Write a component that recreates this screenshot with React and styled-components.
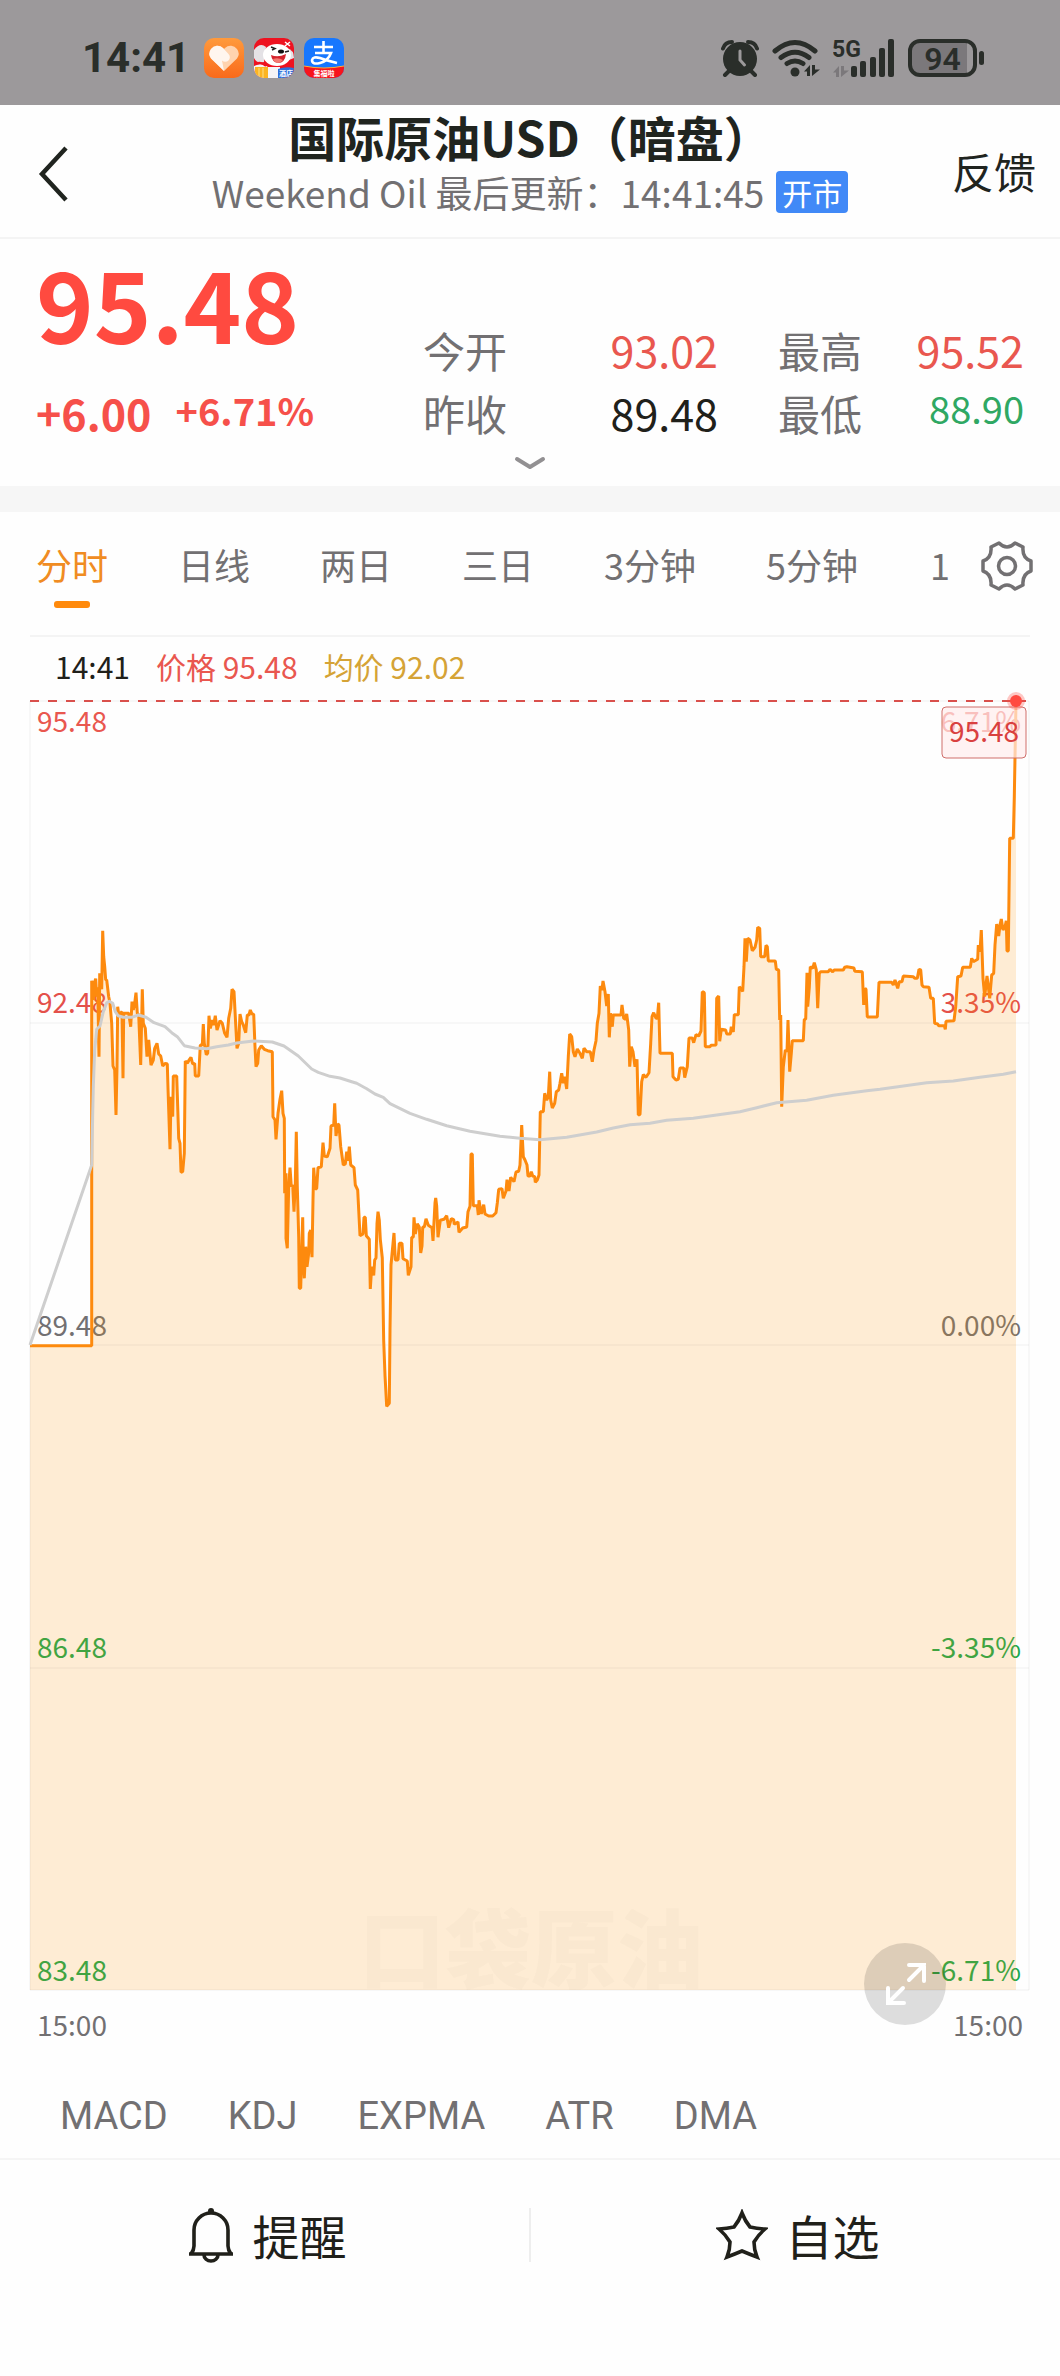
import React, { useState } from "react";
import styled, { createGlobalStyle } from "styled-components";

const GlobalStyle = createGlobalStyle`
  *, *::before, *::after {
    box-sizing: border-box;
  }

  body {
    margin: 0;
    background: #fefefe;
    color: #20241f;
    font-family: "Noto Sans CJK SC", "Noto Sans", sans-serif;
  }

  button {
    margin: 0;
    padding: 0;
    border: none;
    background: none;
    color: inherit;
    font: inherit;
    cursor: pointer;
  }

  svg {
    display: block;
    flex: none;
  }

  h1, p, dl, dt, dd {
    margin: 0;
    font-weight: 400;
  }
`;

const colors = {
  red: "#e9574f",
  green: "#2fa863",
  dark: "#20201a",
  gray: "#727072",
};

/* status bar */

const StatusBar = styled.div`
  display: flex;
  align-items: center;
  justify-content: space-between;
  height: 105px;
  padding: 10px 76px 0 82px;
  background: #9c999b;
  color: #2a2e2a;
`;

const StatusGroup = styled.div`
  display: flex;
  align-items: center;
  gap: ${(props) => props.gap}px;
`;

const Clock = styled.span`
  margin-right: 4px;
  font-family: Roboto, sans-serif;
  font-size: 42px;
  font-weight: 700;
  line-height: 42px;
`;

const Battery = styled.span`
  display: flex;
  align-items: center;
  gap: 2px;

  &::after {
    content: "";
    width: 5px;
    height: 14px;
    border-radius: 3px;
    background: #2a2e2a;
  }
`;

const BatteryCell = styled.span`
  width: 69px;
  height: 38px;
  border: 4px solid #2a2e2a;
  border-radius: 12px;
  background: linear-gradient(90deg, #7b787b 90%, #9c999b 90%);
  font-family: Roboto, sans-serif;
  font-size: 32px;
  font-weight: 600;
  line-height: 32px;
  text-align: center;
`;

/* header */

const Header = styled.header`
  display: grid;
  grid-template-columns: 130px 1fr 130px;
  align-items: center;
  height: 134px;
  border-bottom: 2px solid #f4f4f4;
`;

const BackButton = styled.button`
  justify-self: start;
  padding: 4px 0 0 36px;
`;

const FeedbackButton = styled.button`
  justify-self: end;
  padding-right: 24px;
  font-size: 42px;
  line-height: 48px;
`;

const Heading = styled.div`
  padding-bottom: 20px;
  text-align: center;
  white-space: nowrap;
`;

const Title = styled.h1`
  font-size: 48px;
  font-weight: 700;
  line-height: 56px;
`;

const Subtitle = styled.p`
  display: flex;
  align-items: center;
  justify-content: center;
  gap: 12px;
  margin-top: 5px;
  color: ${colors.gray};
  font-size: 37px;
  line-height: 46px;
`;

const MarketBadge = styled.span`
  padding: 0 6px;
  border-radius: 4px;
  background: #4189f7;
  color: #fff;
  font-size: 30px;
  line-height: 42px;
`;

/* quote */

const Quote = styled.section`
  border-bottom: 26px solid #f6f6f6;
`;

const QuoteBody = styled.div`
  display: grid;
  grid-template-columns: 387fr 601fr;
  height: 206px;
  padding: 0 36px;
`;

const Price = styled.p`
  padding-top: 12px;
  color: #ff4a40;
  font-size: 98px;
  font-weight: 700;
  line-height: 100px;
`;

const Changes = styled.div`
  display: flex;
  align-items: flex-start;
  gap: 24px;
  padding-top: 39px;
  color: #f6504a;
  font-weight: 700;
`;

const Change = styled.span`
  font-size: ${(props) => (props.$small ? 38 : 43)}px;
  line-height: ${(props) => (props.$small ? 40 : 44)}px;
`;

const Stats = styled.dl`
  display: grid;
  grid-template-columns: max-content 211fr max-content 162fr;
  grid-auto-rows: 63px;
  padding-top: 79px;
`;

const StatLabel = styled.dt`
  color: ${colors.gray};
  font-size: 42px;
  line-height: 63px;

  &:nth-of-type(even) {
    padding-left: 60px;
  }
`;

const StatValue = styled.dd`
  color: ${(props) => props.color};
  font-size: ${(props) => (props.$small ? 38 : 43)}px;
  line-height: ${(props) => (props.$small ? 54 : 63)}px;
  text-align: right;
`;

const ExpandQuote = styled.button`
  display: flex;
  justify-content: center;
  width: 100%;
  height: 41px;
  padding-top: 10px;
`;

/* tabs */

const TabBar = styled.div`
  display: flex;
  height: 123px;
`;

const Tabs = styled.nav`
  display: flex;
  flex: 1;
  gap: 70px;
  min-width: 0;
  padding: 26px 0 0 36px;
  overflow: hidden;
`;

const Tab = styled.button`
  display: flex;
  flex: none;
  flex-direction: column;
  align-items: center;
  color: ${(props) => (props.$active ? "#f08c22" : colors.gray)};
  font-size: 36px;
  line-height: 52px;

  &::after {
    content: "";
    width: 36px;
    height: 7px;
    margin-top: 11px;
    border-radius: 3px;
    background: ${(props) => (props.$active ? "#ff8a0c" : "none")};
  }
`;

const NarrowTab = styled(Tab)`
  &::after {
    width: 24px;
  }
`;

const SettingsButton = styled.button`
  height: 108px;
  padding: 0 25px 0 28px;
`;

/* chart */

const ChartSection = styled.section`
  margin: 0 30px;
  border-top: 2px solid #f4f4f4;
`;

const Legend = styled.div`
  display: flex;
  gap: 26px;
  padding-left: 25px;
  font-size: 30px;
  line-height: 58px;
  height: 63px;
`;

const LegendItem = styled.span`
  color: ${(props) => props.color};
`;

const Plot = styled.div`
  position: relative;
`;

const PlotSvg = styled.svg`
  width: 100%;
  height: auto;
  overflow: visible;
  font-size: 28px;
`;

const FullscreenButton = styled.button`
  position: absolute;
  right: 84px;
  bottom: -33px;
  width: 82px;
  height: 82px;
  border-radius: 50%;
  background: rgba(0, 0, 0, 0.13);
`;

const TimeAxis = styled.div`
  display: flex;
  justify-content: space-between;
  height: 68px;
  padding: 0 7px;
  color: ${colors.gray};
  font-size: 28px;
  line-height: 64px;
`;

/* indicators and footer */

const Indicators = styled.nav`
  display: flex;
  gap: 60px;
  height: 100px;
  padding: 14px 0 0 60px;
  border-bottom: 2px solid #f5f5f5;
`;

const Indicator = styled.button`
  color: ${colors.gray};
  font-family: Roboto, sans-serif;
  font-size: 38px;
`;

const Footer = styled.footer`
  display: grid;
  grid-template-columns: 1fr 2px 1fr;
  align-items: center;
  height: 150px;
`;

const FooterButton = styled.button`
  display: flex;
  align-items: center;
  justify-content: center;
  gap: 18px;
  padding-left: 4px;
  color: ${colors.dark};
  font-size: 47px;
  line-height: 54px;
`;

const Divider = styled.span`
  height: 54px;
  background: #eeeeee;
`;

/* data */

const stats = [
  { label: "今开", value: "93.02", color: colors.red },
  { label: "最高", value: "95.52", color: colors.red },
  { label: "昨收", value: "89.48", color: colors.dark },
  { label: "最低", value: "88.90", color: colors.green, small: true },
];

const tabs = ["分时", "日线", "两日", "三日", "3分钟", "5分钟"];

const indicators = ["MACD", "KDJ", "EXPMA", "ATR", "DMA"];

const levels = [
  { y: 1, text: 32, price: "95.48", percent: "6.71%", color: "#e9574f" },
  { y: 323, text: 313, price: "92.48", percent: "3.35%", color: "#e4504a" },
  { y: 645, text: 636, price: "89.48", percent: "0.00%", color: "#727072" },
  { y: 968, text: 958, price: "86.48", percent: "-3.35%", color: "#1aa84f" },
  { y: 1290, text: 1281, price: "83.48", percent: "-6.71%", color: "#1aa84f" },
];

// Each run is measured from its own origin, three units to one chart unit.
const priceRuns = [
  {
    origin: [0, 0],
    points: "0,1937 184,1937",
  },
  {
    origin: [150, 600],
    points: `35,1337 35,242 38,270 41,300 43,250 47,236 50,290 53,262 57,470 59,220 62,240 65,268 68,92 71,170
      74,200 77,240 80,240 86,290 90,310 95,370 99,498 104,510 108,645 111,500 113,320 117,350 121,340 126,335
      129,535 131,340 138,340 146,340 152,380 156,305 160,330 164,310 168,278 172,340 176,345 182,495 187,268
      190,370 196,385 201,470 206,420 213,495 220,480 224,445 231,430 236,462 242,468 248,498 256,490 262,492
      264,565 270,748 273,590 278,650 280,528 290,528 293,620 296,715 300,730 303,817 308,815 313,760 316,483
      322,490 326,482 333,472 338,492 344,490 346,528 356,528 361,435 367,435 370,372 373,430 379,464 383,460
      387,347 391,385 397,360 401,375 406,347 411,390 420,362 427,370 434,400 441,412 446,355 452,325 456,268
      462,275 466,350 471,445 476,430 480,342 485,365 490,375 497,398 502,345 507,345 511,330 516,342 521,343
      525,440 528,500 533,490 536,450 544,437 553,448 563,452 577,455 578,560 579,650 585,660 588,718 594,640
      600,598 605,572 609,640 613,655 614,880 618,820 618,1015 622,1045 626,860 630,803 634,860 638,855 642,935
      646,850 649,695 652,860 656,1010 658,1165 662,1165 665,1050 668,952 670,1080 673,1135 677,1040 681,1100
      686,1060 688,1000 692,990 696,1072 699,900 701,803 706,868 710,865 714,803 724,800 729,728 733,768
      742,770 750,745 753,678 761,675 764,610 768,708 773,672 777,675 782,740 790,795 796,792 800,755 804,782
      808,740 812,795 822,803 826,855 833,870`,
  },
  {
    origin: [0, 0],
    points: `990,1607 999,1602 1002,1552 1006,1552 1009,1607 1018,1618 1021,1767 1025,1700 1031,1726 1034,1680
      1038,1674 1041,1571 1044,1535 1048,1561 1051,1618 1057,1674 1061,1922 1065,2026 1070,2119 1078,2110
      1080,1891 1083,1695 1092,1599 1096,1680 1104,1680 1108,1630 1116,1630 1119,1676 1132,1683 1135,1726
      1143,1700 1145,1612 1150,1612 1152,1552 1156,1602 1162,1571 1168,1581 1172,1659 1176,1638 1178,1581
      1183,1581 1188,1556 1195,1576 1206,1583 1209,1623 1215,1509 1217,1494 1220,1519 1224,1612 1231,1561
      1242,1558 1250,1547 1256,1583 1264,1556 1271,1559 1273,1573 1284,1566 1287,1597 1298,1584 1310,1581
      1314,1535 1320,1519 1323,1362 1327,1362 1330,1517 1342,1517 1345,1545 1347,1501 1354,1542 1361,1514
      1365,1542 1376,1548 1388,1548 1398,1538 1402,1509 1406,1468 1416,1466 1420,1495 1428,1473 1431,1439
      1437,1473 1442,1432 1452,1445 1458,1416 1466,1414 1470,1395 1475,1275 1480,1370 1485,1380 1491,1395`,
  },
  {
    origin: [1470, 600],
    points: `24,828 30,828 34,815 38,828 44,830 46,847 52,840 57,825 61,635 70,635 74,580 80,600 85,590 89,515
      92,600 97,624 104,610 109,575 116,570 120,550 125,520 130,550 134,530 140,567 145,470 149,402 155,410
      160,455 165,470 172,447 180,460 187,475 192,445 200,455 211,455 217,485 222,450 228,422 232,370 237,340
      241,258 246,270 249,243 255,275 260,318 265,282 268,412 272,340 277,380 280,345 303,345 306,315 311,355
      316,358 320,342 326,390 329,500 334,440 339,455 345,500 351,478 355,645 360,643 365,545 370,524 378,532
      387,518 392,430 396,350 401,338 408,355 412,355 416,308 420,460 457,460 459,530 468,540 475,538 480,504
      491,504 494,533 502,500 507,414 517,414 521,428 528,404 536,408 543,393 547,275 553,278 556,440 570,440
      573,436 588,435 590,295 596,288 599,424 604,388 617,390 620,402 631,402 634,380 640,396 643,344 655,344
      658,260 668,274 672,200 675,115 679,185 683,115 690,120 697,152 705,142 710,120 713,82 719,85 722,170
      734,170 738,136 742,140 745,183 766,183 769,208 776,210 779,360 782,345 785,620 790,500 796,450 801,455
      804,360 809,515 814,460 817,422 850,422 853,358 857,358 861,218 863,320 868,262 871,200 878,205 883,188
      889,210 893,325 898,220`,
  },
  {
    origin: [2250, -210],
    points: `122,1025 145,1025 150,1018 158,1026 162,1020 190,1020 194,1012 201,1010 222,1014 224,1024
      247,1025 251,1125 255,1075 258,1078 262,1161 292,1161 297,1057 335,1057 340,1065 345,1050 353,1075
      358,1055 366,1055 370,1038 400,1040 404,1045 412,1045 417,1018 422,1020 426,1065 430,1070 447,1072
      452,1105 460,1105 464,1180 473,1182 476,1187 493,1187 496,1198 498,1174 522,1172 527,1130 533,1040
      543,1038 548,1012 571,1012 575,985 580,995 593,988 595,945 600,965 604,900 609,1045 614,1100 621,1038
      629,1105 635,1035 641,1030 645,945 650,882 656,918 660,885 664,867 669,900 675,890 679,872 681,963
      685,963 689,625 700,625 703,500 708,215`,
  },
];

const averageRuns = [
  {
    origin: [0, 0],
    points: "0,1935 185,1395",
  },
  {
    origin: [150, 600],
    points: `38,640 40,560 44,450 50,388 60,378 70,335 80,308 88,304 98,310 106,335 114,347 130,352 155,352
      175,345 198,352 222,368 255,380 275,398 292,410 313,437 345,444 380,446 410,440 445,435 470,429 520,423
      577,426 612,438 655,468 695,507 715,517 750,529 780,534 815,545`,
  },
  {
    origin: [0, 0],
    points: `980,1150 1010,1166 1035,1182 1060,1192 1080,1211 1140,1240 1190,1258 1250,1277 1320,1294
      1410,1309 1470,1315 1530,1319 1610,1312 1700,1296 1750,1284 1800,1274 1860,1270 1910,1261 1990,1255
      2060,1245 2130,1235 2180,1223 2240,1208 2330,1201 2410,1186 2510,1172 2550,1168 2690,1148 2770,1143
      2850,1132 2920,1123 2958,1115`,
  },
];

function toPath(runs) {
  const points = runs.flatMap(({ origin, points }) =>
    points
      .trim()
      .split(/\s+/)
      .map((point) => {
        const [x, y] = point.split(",").map(Number);
        return `${((x + origin[0]) / 3).toFixed(1)} ${(
          (y + origin[1]) /
          3
        ).toFixed(1)}`;
      })
  );
  return `M${points.join("L")}`;
}

const pricePath = toPath(priceRuns);
const averagePath = toPath(averageRuns);

/* icons */

function HeartApp() {
  return (
    <svg width="40" height="40" viewBox="0 0 40 40">
      <defs>
        <linearGradient id="heartBg" x1="0" y1="0" x2="0" y2="1">
          <stop offset="0" stopColor="#ff9a3c" />
          <stop offset="1" stopColor="#f96a1b" />
        </linearGradient>
      </defs>
      <rect width="40" height="40" rx="10" fill="url(#heartBg)" />
      <path
        d="M20 33 7 20.500a8 8 0 0 1 0-9.500 8 8 0 0 1 12-1l1 1 1-1a8 8 0 0 1 12 1 8 8 0 0 1 0 9.500Z"
        fill="#ffd3ae"
      />
      <path
        d="M20 33 7 20.500a8 8 0 0 1 0-9.500 8 8 0 0 1 12-1l5.500 6a4.500 4.500 0 0 1-6.500 6.500Z"
        fill="#fff"
        fillOpacity="0.8"
      />
    </svg>
  );
}

function DogApp() {
  return (
    <svg width="40" height="40" viewBox="0 0 40 40">
      <defs>
        <clipPath id="dogClip">
          <rect width="40" height="40" rx="10" />
        </clipPath>
      </defs>
      <g clipPath="url(#dogClip)">
        <rect width="40" height="40" fill="#ee1220" />
        <path d="M0 12Q6 4 12 9L10 24Q3 26 0 20Z" fill="#e4e2e6" />
        <path d="M33 10Q40 12 40 20L35 22Z" fill="#e4e2e6" />
        <ellipse cx="23" cy="17" rx="14" ry="11" fill="#fff" />
        <path d="M0 28q8-4 14 1h12v11H0Z" fill="#f5f4f6" />
        <path d="M17 17q7 3 15-1-1 9-8 9-6-1-7-8Z" fill="#d4232c" />
        <path d="M19 21q5-2 10 1-2 3-5 3-4-1-5-4Z" fill="#f47a72" />
        <ellipse cx="27" cy="13.500" rx="3" ry="2" fill="#111" />
        <path
          d="m17 9 4 1.500-3 1.500M31 14l4-1"
          fill="none"
          stroke="#222"
          strokeWidth="1.500"
        />
        <path
          d="M2 26q5-3 10 2"
          fill="none"
          stroke="#ee1220"
          strokeWidth="2"
        />
        <path d="m31 4 5 4m0-4-5 4" stroke="#fff" strokeWidth="1.500" />
        <path d="M1 29h13v11H1Z" fill="#fbb422" />
        <path d="M5 30v10M9 30v10" stroke="#fce08a" strokeWidth="1" />
        <path d="M24 31q8-3 16-1v10H24Z" fill="#2f70dc" />
        <text x="25" y="38" fontSize="7" fontWeight="700" fill="#fff">
          酒店
        </text>
      </g>
    </svg>
  );
}

function PayApp() {
  return (
    <svg width="40" height="40" viewBox="0 0 40 40">
      <defs>
        <clipPath id="payClip">
          <rect width="40" height="40" rx="10" />
        </clipPath>
      </defs>
      <g clipPath="url(#payClip)">
        <rect width="40" height="40" fill="#1777fe" />
        <path
          d="M10 9h19M19.500 3v12M11 15h16q-3 8-11 10-8 2-8-3 1-4 8-2 8 3 17 5"
          fill="none"
          stroke="#fff"
          strokeWidth="2.600"
        />
        <path d="M0 28q20 4 40 0v12H0Z" fill="#f7141c" />
        <path d="M0 28q20 4 40 0" fill="none" stroke="#ffb03a" />
        <text
          x="20"
          y="38"
          fontSize="7"
          fontWeight="700"
          fill="#fff"
          textAnchor="middle"
        >
          集福啦
        </text>
      </g>
    </svg>
  );
}

function AlarmIcon() {
  return (
    <svg width="38" height="38" viewBox="0 0 38 38" fill="#2a2e2a">
      <circle cx="19" cy="20" r="17" />
      <path
        d="M2 9.500Q4 3 11 3M27 3q7 0 9 6.500M8 32l-4 4M30 32l4 4"
        fill="none"
        stroke="#2a2e2a"
        strokeWidth="4"
        strokeLinecap="round"
      />
      <path
        d="M19 12v9l4.500 5"
        fill="none"
        stroke="#9c999b"
        strokeWidth="3"
        strokeLinecap="round"
      />
    </svg>
  );
}

function WifiIcon() {
  return (
    <svg width="48" height="38" viewBox="0 0 48 38" fill="none">
      <path
        d="M3 12Q23-5 43 12M9 18.500Q23 8 37 18.500M15 24.500q8-5 16 0"
        stroke="#2a2e2a"
        strokeWidth="5"
        strokeLinecap="round"
      />
      <circle cx="23" cy="33" r="4.500" fill="#2a2e2a" />
      <path d="M32 32.500 38 26v11h-3v-4.500ZM40 26h3v4.500h5L40 37Z" fill="#2a2e2a" />
    </svg>
  );
}

function SignalIcon() {
  return (
    <svg width="62" height="38" viewBox="0 0 62 38" fill="#2a2e2a">
      <text
        x="-1"
        y="18"
        fontFamily="Roboto"
        fontSize="23"
        fontWeight="700"
      >
        5G
      </text>
      <path
        d="M0 33.500 6 27v11H3v-4.500ZM8 27h3v4.500h5L8 38Z"
        fill="#7b787b"
      />
      <rect x="18" y="27" width="6" height="11" rx="2" />
      <rect x="27" y="22" width="6" height="16" rx="2" />
      <rect x="37" y="18" width="6" height="20" rx="2" />
      <rect x="46" y="9" width="6" height="29" rx="2" />
      <rect x="55" y="0" width="6" height="38" rx="2" />
    </svg>
  );
}

function BackIcon() {
  return (
    <svg width="34" height="60" viewBox="0 0 34 60" fill="none">
      <path d="M30 5 6 31l24 26" stroke="#20241f" strokeWidth="4.500" />
    </svg>
  );
}

function ChevronIcon() {
  return (
    <svg width="34" height="16" viewBox="0 0 34 16" fill="none">
      <path
        d="m4 4 13 8 13-8"
        stroke="#929092"
        strokeWidth="4"
        strokeLinecap="round"
        strokeLinejoin="round"
      />
    </svg>
  );
}

function GearIcon() {
  return (
    <svg width="56" height="52" viewBox="-28 -26 56 52" fill="none">
      <g stroke="#727072" strokeWidth="3.500" strokeLinejoin="round">
        <path d="M-8-23Q0-15 8-23L16-19Q15-8 24-5L24 5Q15 8 16 19L8 23Q0 15-8 23L-16 19Q-15 8-24 5L-24-5Q-15-8-16-19Z" />
        <circle r="8.500" />
      </g>
    </svg>
  );
}

function BellIcon() {
  return (
    <svg width="48" height="56" viewBox="0 0 48 56" fill="none">
      <circle cx="24" cy="4" r="3" fill={colors.dark} />
      <path
        d="M2 47h44M4 47q3-4 3-8V23a17 17 0 0 1 34 0v16q0 4 3 8M17 48a7 6 0 0 0 14 0"
        stroke={colors.dark}
        strokeWidth="3.600"
      />
    </svg>
  );
}

function StarIcon() {
  return (
    <svg width="52" height="52" viewBox="0 0 52 52" fill="none">
      <path
        d="M26 4Q29 12 34 18 41 19.500 49 20 42 26 38 33 38 41 41 48 33 45 26 42 19 45 11 48 14 41 14 33 10 26 3 20 11 19.500 18 18 23 12 26 4Z"
        stroke={colors.dark}
        strokeWidth="3.600"
      />
    </svg>
  );
}

function FullscreenIcon() {
  return (
    <svg width="82" height="82" viewBox="0 0 82 82" fill="none">
      <path
        d="M45 22h15v16M60 22 45 37M24 45v15h16M24 60l15-15"
        stroke="#fff"
        strokeWidth="4"
        strokeLinecap="round"
      />
    </svg>
  );
}

function PriceChart() {
  return (
    <PlotSvg viewBox="0 0 1000 1292" role="img" aria-label="分时走势">
      <text
        x="501"
        y="1282"
        fontSize="86"
        fontWeight="900"
        fill="#f9f9f9"
        textAnchor="middle"
      >
        口袋原油
      </text>
      {levels.map((level) => (
        <g key={level.price} fill={level.color}>
          <text x="7" y={level.text}>
            {level.price}
          </text>
          <text x="991" y={level.text} textAnchor="end">
            {level.percent}
          </text>
        </g>
      ))}
      <path
        d={`${pricePath}V1290H0Z`}
        fill="#ff9208"
        fillOpacity="0.17"
      />
      {levels.map((level) => (
        <path
          key={level.price}
          d={`M0 ${level.y}H999`}
          stroke="#000"
          strokeOpacity="0.06"
        />
      ))}
      <path d="M0 1V1290M999 1V1290" stroke="#000" strokeOpacity="0.06" />
      <path
        d={pricePath}
        fill="none"
        stroke="#fd8a0e"
        strokeWidth="3"
        strokeLinejoin="bevel"
      />
      <path
        d={averagePath}
        fill="none"
        stroke="#cecece"
        strokeWidth="3"
        strokeLinejoin="round"
      />
      <path
        d="M0 1H996"
        stroke="#d9504c"
        strokeWidth="2"
        strokeDasharray="9 9"
      />
      <rect
        x="912"
        y="7"
        width="84"
        height="51"
        rx="4"
        fill="#ffecec"
        fillOpacity="0.7"
        stroke="#cf6f6b"
      />
      <text x="989" y="42" fill="#d9403f" textAnchor="end">
        95.48
      </text>
      <circle cx="986" cy="1" r="9" fill="#ff4a40" fillOpacity="0.3" />
      <circle cx="986" cy="1" r="6" fill="#ff4a40" />
    </PlotSvg>
  );
}

function App() {
  const [activeTab, setActiveTab] = useState("分时");

  return (
    <>
      <GlobalStyle />
      <StatusBar>
        <StatusGroup gap={10}>
          <Clock>14:41</Clock>
          <HeartApp />
          <DogApp />
          <PayApp />
        </StatusGroup>
        <StatusGroup gap={13}>
          <AlarmIcon />
          <WifiIcon />
          <SignalIcon />
          <Battery>
            <BatteryCell>94</BatteryCell>
          </Battery>
        </StatusGroup>
      </StatusBar>

      <Header>
        <BackButton aria-label="返回">
          <BackIcon />
        </BackButton>
        <Heading>
          <Title>国际原油USD（暗盘）</Title>
          <Subtitle>
            Weekend Oil 最后更新：14:41:45
            <MarketBadge>开市</MarketBadge>
          </Subtitle>
        </Heading>
        <FeedbackButton>反馈</FeedbackButton>
      </Header>

      <Quote>
        <QuoteBody>
          <div>
            <Price>95.48</Price>
            <Changes>
              <Change>+6.00</Change>
              <Change $small>+6.71%</Change>
            </Changes>
          </div>
          <Stats>
            {stats.map((stat) => (
              <React.Fragment key={stat.label}>
                <StatLabel>{stat.label}</StatLabel>
                <StatValue color={stat.color} $small={stat.small}>
                  {stat.value}
                </StatValue>
              </React.Fragment>
            ))}
          </Stats>
        </QuoteBody>
        <ExpandQuote aria-label="展开">
          <ChevronIcon />
        </ExpandQuote>
      </Quote>

      <TabBar>
        <Tabs>
          {tabs.map((tab) => (
            <Tab
              key={tab}
              $active={tab === activeTab}
              onClick={() => setActiveTab(tab)}
            >
              {tab}
            </Tab>
          ))}
          <NarrowTab>1</NarrowTab>
        </Tabs>
        <SettingsButton aria-label="设置">
          <GearIcon />
        </SettingsButton>
      </TabBar>

      <ChartSection>
        <Legend>
          <LegendItem color={colors.dark}>14:41</LegendItem>
          <LegendItem color={colors.red}>价格 95.48</LegendItem>
          <LegendItem color="#d5a336">均价 92.02</LegendItem>
        </Legend>
        <Plot>
          <PriceChart />
          <FullscreenButton aria-label="全屏">
            <FullscreenIcon />
          </FullscreenButton>
        </Plot>
        <TimeAxis>
          <span>15:00</span>
          <span>15:00</span>
        </TimeAxis>
      </ChartSection>

      <Indicators>
        {indicators.map((name) => (
          <Indicator key={name}>{name}</Indicator>
        ))}
      </Indicators>

      <Footer>
        <FooterButton>
          <BellIcon />
          提醒
        </FooterButton>
        <Divider />
        <FooterButton>
          <StarIcon />
          自选
        </FooterButton>
      </Footer>
    </>
  );
}

export default App;
